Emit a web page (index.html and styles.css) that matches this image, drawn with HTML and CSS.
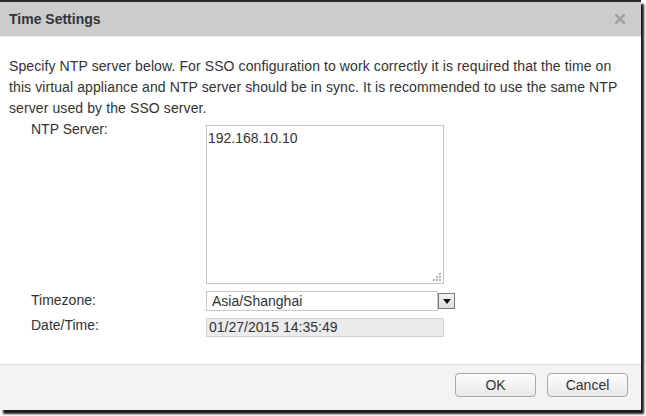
FILE: index.html
```html
<!DOCTYPE html>
<html>
<head>
<meta charset="utf-8">
<link rel="stylesheet" href="styles.css">
</head>
<body>
<div class="dialog">
  <div class="titlebar">
    <span class="title">Time Settings</span>
    <svg class="close" width="10" height="10" viewBox="0 0 10 10"><path d="M1 1L9 9M9 1L1 9" stroke="#a3a3a3" stroke-width="2.6" stroke-linecap="square"/></svg>
  </div>
  <div class="content">
    <p class="intro">Specify NTP server below. For SSO configuration to work correctly it is required that the time on<br>this virtual appliance and NTP server should be in sync. It is recommended to use the same NTP<br>server used by the SSO server.</p>
    <div class="form">
      <div class="label lbl-ntp">NTP Server:</div>
      <div class="field">
        <div class="textarea-wrap">
          <textarea class="textarea">192.168.10.10</textarea>
          <svg class="grip" width="9" height="9" viewBox="0 0 9 9"><g fill="#b8b8b8"><rect x="7" y="1" width="2" height="2"/><rect x="4" y="4" width="2" height="2"/><rect x="7" y="4" width="2" height="2"/><rect x="1" y="7" width="2" height="2"/><rect x="4" y="7" width="2" height="2"/><rect x="7" y="7" width="2" height="2"/></g></svg>
        </div>
      </div>
      <div class="label lbl-tz">Timezone:</div>
      <div class="field">
        <div class="select">
          <span class="select-text">Asia/Shanghai</span>
          <span class="select-btn"><svg width="8" height="5" viewBox="0 0 8 5"><path d="M0 0H8L4 5Z" fill="#111"/></svg></span>
        </div>
      </div>
      <div class="label lbl-dt">Date/Time:</div>
      <div class="field">
        <div class="readonly">01/27/2015 14:35:49</div>
      </div>
    </div>
  </div>
  <div class="footer">
    <button class="btn">OK</button>
    <button class="btn">Cancel</button>
  </div>
</div>
</body>
</html>
```

FILE: styles.css
```css
html, body {
  margin: 0;
  padding: 0;
  background: #ffffff;
  width: 646px;
  height: 416px;
  overflow: hidden;
  font-family: "Liberation Sans", Arial, sans-serif;
  font-size: 14px;
  color: #333333;
}

.dialog {
  width: 641px;
  height: 408px;
  border-top: 2px solid #2b2b2b;
  background: #ffffff;
  display: flex;
  flex-direction: column;
  box-shadow: 3px 4px 2px rgba(0, 0, 0, 0.9);
}

.titlebar {
  height: 34px;
  background: #cccccc;
  border-bottom: 1px solid #e8e8e8;
  display: flex;
  align-items: center;
  justify-content: space-between;
  padding: 0 16px 0 9px;
}

.title {
  font-weight: bold;
  font-size: 14px;
  color: #333333;
  margin-top: -1px;
}

.close {
  display: block;
  margin-top: -1px;
}

.content {
  flex: 1;
  padding: 19px 0 0 9px;
}

.intro {
  margin: 0;
  line-height: 21px;
  letter-spacing: 0.1px;
  white-space: nowrap;
}

.form {
  display: grid;
  grid-template-columns: 175px 1fr;
  margin-left: 22px;
}

.label {
  line-height: 21px;
}

.lbl-tz {
  margin-top: 6px;
}

.lbl-dt {
  margin-top: 4px;
}

.field {
  display: flex;
}

.textarea-wrap {
  position: relative;
  margin-top: 6px;
  width: 238px;
  height: 159px;
}

.textarea {
  box-sizing: border-box;
  width: 238px;
  height: 159px;
  border: 1px solid #c4c4c4;
  padding: 4px 1px;
  margin: 0;
  resize: none;
  font-family: "Liberation Sans", Arial, sans-serif;
  font-size: 14px;
  color: #333333;
  line-height: 17px;
  outline: none;
}

.grip {
  position: absolute;
  right: 3px;
  bottom: 3px;
}

.select {
  margin-top: 7px;
  display: flex;
  height: 20px;
}

.select-text {
  box-sizing: border-box;
  width: 232px;
  height: 20px;
  border: 1px solid #c8c8c8;
  padding-left: 5px;
  line-height: 18px;
}

.select-btn {
  box-sizing: border-box;
  width: 17px;
  height: 16px;
  margin-top: 2px;
  border: 1px solid #7a7a7a;
  background: linear-gradient(#f4f4f4, #dcdcdc);
  display: flex;
  align-items: center;
  justify-content: center;
}

.readonly {
  box-sizing: border-box;
  margin-top: 7px;
  width: 238px;
  height: 19px;
  border: 1px solid #d0d0d0;
  background: #ebebeb;
  padding-left: 2px;
  line-height: 17px;
}

.footer {
  height: 37px;
  border-top: 1px solid #dddddd;
  background: #f3f3f3;
  display: flex;
  justify-content: flex-end;
  align-items: flex-start;
  gap: 11px;
  padding: 8px 13px 0 0;
}

.btn {
  box-sizing: border-box;
  width: 81px;
  height: 24px;
  border: 1px solid #a8a8a8;
  border-radius: 4px;
  background: linear-gradient(#fdfdfd, #e9e9e9);
  font-family: "Liberation Sans", Arial, sans-serif;
  font-size: 14px;
  color: #333333;
  padding: 0;
}
```
